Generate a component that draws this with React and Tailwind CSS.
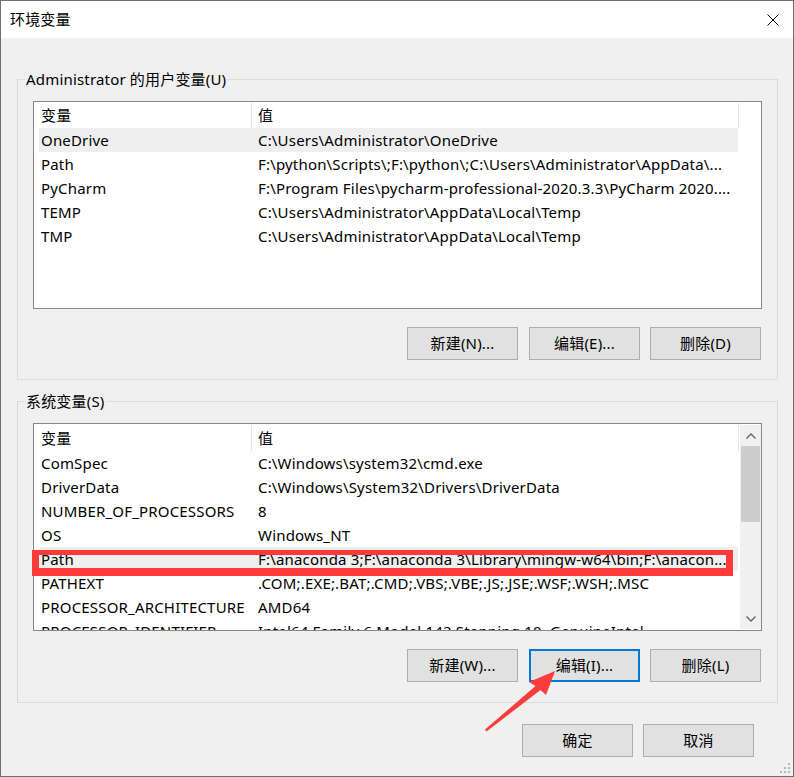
import React from "react";

const userRows = [
  ["OneDrive", "C:\\Users\\Administrator\\OneDrive"],
  ["Path", "F:\\python\\Scripts\\;F:\\python\\;C:\\Users\\Administrator\\AppData\\..."],
  ["PyCharm", "F:\\Program Files\\pycharm-professional-2020.3.3\\PyCharm 2020...."],
  ["TEMP", "C:\\Users\\Administrator\\AppData\\Local\\Temp"],
  ["TMP", "C:\\Users\\Administrator\\AppData\\Local\\Temp"],
];

const sysRows = [
  ["ComSpec", "C:\\Windows\\system32\\cmd.exe"],
  ["DriverData", "C:\\Windows\\System32\\Drivers\\DriverData"],
  ["NUMBER_OF_PROCESSORS", "8"],
  ["OS", "Windows_NT"],
  ["Path", "F:\\anaconda 3;F:\\anaconda 3\\Library\\mingw-w64\\bin;F:\\anacon..."],
  ["PATHEXT", ".COM;.EXE;.BAT;.CMD;.VBS;.VBE;.JS;.JSE;.WSF;.WSH;.MSC"],
  ["PROCESSOR_ARCHITECTURE", "AMD64"],
  ["PROCESSOR_IDENTIFIER", "Intel64 Family 6 Model 142 Stepping 10, GenuineIntel"],
];

function Button({ children, focused }) {
  return (
    <div
      className={
        focused
          ? "w-[111px] h-[33px] bg-[#e1e1e1] border-2 border-[#0078d7] flex items-center justify-center leading-none"
          : "w-[111px] h-[33px] bg-[#e1e1e1] border border-[#adadad] flex items-center justify-center leading-none"
      }
    >
      {children}
    </div>
  );
}

function Chevron({ down }) {
  return (
    <svg width="10" height="6" viewBox="0 0 10 6">
      <polyline
        points={down ? "0.5,0.5 5,5 9.5,0.5" : "0.5,5.5 5,1 9.5,5.5"}
        fill="none"
        stroke="#606060"
        strokeWidth="1.3"
      />
    </svg>
  );
}

function Scrollbar() {
  return (
    <div className="w-[21px] my-[1px] bg-[#f0f0f0] flex flex-col">
      <div className="h-[21px] flex items-center justify-center">
        <Chevron />
      </div>
      <div className="h-[76px] mx-[1px] bg-[#cdcdcd]" />
      <div className="flex-1" />
      <div className="h-[21px] flex items-center justify-center">
        <Chevron down />
      </div>
    </div>
  );
}

function List({ rows, headerH, selected, scroll }) {
  return (
    <div className="h-[208px] border border-[#828790] bg-white flex overflow-hidden">
      <div className="w-[705px] flex flex-col">
        <div className={headerH === 27 ? "h-[27px] flex shrink-0" : "h-[26px] flex shrink-0"}>
          <div className="w-[218px] pl-[7px] flex items-center border-r border-[#e5e5e5] mt-[1px]">变量</div>
          <div className="w-[487px] pl-[6px] flex items-center border-r border-[#e5e5e5] mt-[1px]">值</div>
        </div>
        {rows.map(([k, v], i) => (
          <div
            key={i}
            className={
              i === selected
                ? "ml-[5px] w-[699px] h-[24px] shrink-0 flex items-center bg-[#efefef]"
                : "ml-[5px] w-[699px] h-[24px] shrink-0 flex items-center"
            }
          >
            <div className="w-[213px] shrink-0 pl-[2px] whitespace-nowrap overflow-hidden">{k}</div>
            <div className="pl-[6px] whitespace-nowrap">{v}</div>
          </div>
        ))}
      </div>
      <div className="flex-1" />
      {scroll && <Scrollbar />}
    </div>
  );
}

function Group({ label, children, pb }) {
  return (
    <div className="relative w-[761px] border border-[#dcdcdc] pt-[21px] pl-[15px] pr-[15px]">
      <div className="absolute top-[-11px] left-[7px] px-[1px] bg-[#f0f0f0] leading-[20px]">{label}</div>
      {children}
      <div className={pb === 20 ? "h-[20px]" : "h-[19px]"} />
    </div>
  );
}

export default function App() {
  return (
    <div className="relative w-[794px] h-[777px] border border-[#6f6f6f] bg-[#f0f0f0] flex flex-col text-[15px] tracking-[0.18px] text-black font-['Noto_Sans','Noto_Sans_CJK_SC',sans-serif]">
      <div className="h-[37px] shrink-0 bg-white flex items-center justify-between pl-[9px] pr-[14px]">
        <span className="leading-none">环境变量</span>
        <svg width="12" height="12" viewBox="0 0 12 12">
          <line x1="0.5" y1="0.5" x2="11.5" y2="11.5" stroke="#000" strokeWidth="1" />
          <line x1="11.5" y1="0.5" x2="0.5" y2="11.5" stroke="#000" strokeWidth="1" />
        </svg>
      </div>
      <div className="flex flex-col px-[16px] pt-[41px]">
        <Group label="Administrator 的用户变量(U)" pb={19}>
          <List rows={userRows} headerH={26} selected={0} />
          <div className="mt-[18px] flex justify-end mr-[1px]">
            <Button>新建(N)...</Button>
            <div className="w-[11px]" />
            <Button>编辑(E)...</Button>
            <div className="w-[10px]" />
            <Button>删除(D)</Button>
          </div>
        </Group>
        <div className="h-[21px]" />
        <Group label="系统变量(S)" pb={20}>
          <List rows={sysRows} headerH={27} selected={4} scroll />
          <div className="mt-[18px] flex justify-end mr-[1px]">
            <Button>新建(W)...</Button>
            <div className="w-[11px]" />
            <Button focused>编辑(I)...</Button>
            <div className="w-[10px]" />
            <Button>删除(L)</Button>
          </div>
        </Group>
        <div className="mt-[21px] flex justify-end mr-[23px]">
          <Button>确定</Button>
          <div className="w-[10px]" />
          <Button>取消</Button>
        </div>
      </div>

      {/* annotation: red box */}
      <div className="absolute left-[31px] top-[549px] w-[701px] h-[26px] border-[#fc3a3a] border-t-[5px] border-b-[8px] border-l-[7px] border-r-[7px] pointer-events-none" />

      {/* annotation: red arrow */}
      <svg className="absolute left-0 top-0 pointer-events-none" width="794" height="777" viewBox="0 0 794 777">
        <polygon points="554,670 545,694 539.5,689 485.5,730.5 484,728.5 534.5,685 528,681" fill="#fb3c3c" />
      </svg>

      {/* resize grip */}
      <svg className="absolute left-[778px] top-[761px]" width="12" height="12" viewBox="0 0 12 12">
        <rect x="9" y="1" width="2" height="2" fill="#b8b8b8" />
        <rect x="5" y="5" width="2" height="2" fill="#b8b8b8" />
        <rect x="9" y="5" width="2" height="2" fill="#b8b8b8" />
        <rect x="1" y="9" width="2" height="2" fill="#b8b8b8" />
        <rect x="5" y="9" width="2" height="2" fill="#b8b8b8" />
        <rect x="9" y="9" width="2" height="2" fill="#b8b8b8" />
      </svg>
    </div>
  );
}
